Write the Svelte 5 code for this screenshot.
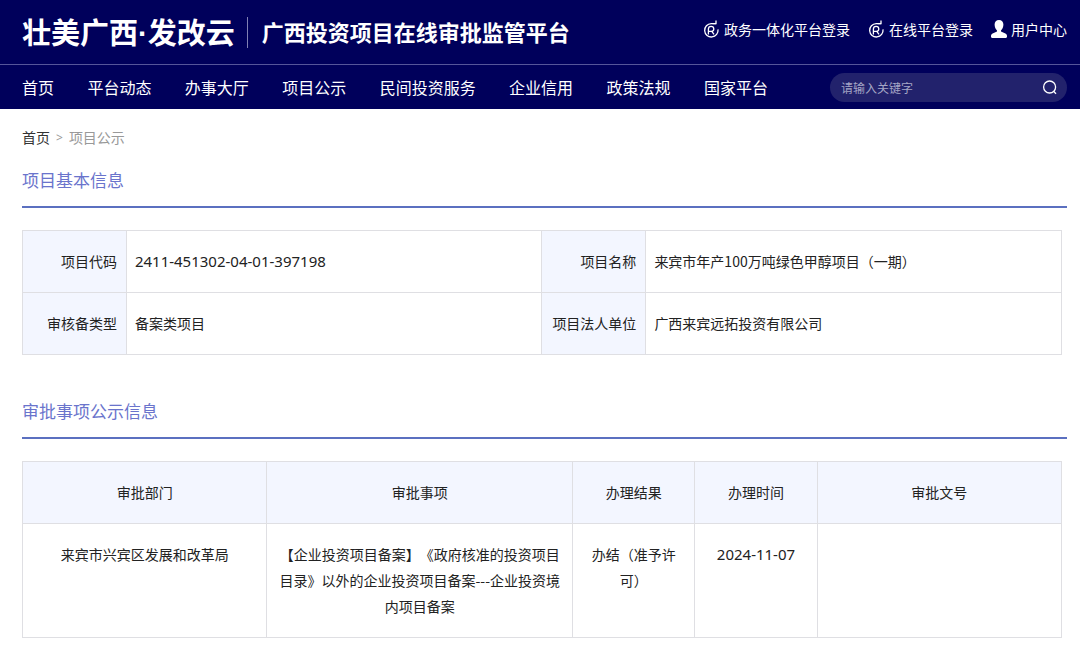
<script lang="ts">
  let keyword = '';

  const navItems = ['首页', '平台动态', '办事大厅', '项目公示', '民间投资服务', '企业信用', '政策法规', '国家平台'];
  const logins = ['政务一体化平台登录', '在线平台登录'];

  const baseInfo = [
    [
      { label: '项目代码', value: '2411-451302-04-01-397198', num: true },
      { label: '项目名称', value: '来宾市年产100万吨绿色甲醇项目（一期）', num: false }
    ],
    [
      { label: '审核备类型', value: '备案类项目', num: false },
      { label: '项目法人单位', value: '广西来宾远拓投资有限公司', num: false }
    ]
  ];

  const approvalHead = ['审批部门', '审批事项', '办理结果', '办理时间', '审批文号'];
  const approvals = [
    {
      dept: '来宾市兴宾区发展和改革局',
      item: '【企业投资项目备案】《政府核准的投资项目目录》以外的企业投资项目备案---企业投资境内项目备案',
      result: '办结（准予许可）',
      date: '2024-11-07',
      docNo: ''
    }
  ];
</script>

<header>
  <div class="top">
    <a class="brand" href="#/">
      <span class="logo">壮美广西<span class="dot">·</span>发改云</span>
      <span class="title">广西投资项目在线审批监管平台</span>
    </a>
    <div class="links">
      {#each logins as text}
        <a href="#/login">
          <svg width="17" height="18" viewBox="0 0 17 18" fill="none" stroke="currentColor" stroke-width="1.3">
            <path d="M13 3.600H8.200A6.700 6.700 0 1 0 15 9.400" />
            <path d="M9.600 3.600L13 3.600V.6" />
            <path d="M5.400 14.400V9a2.700 2.700 0 0 1 5.400 0c0 1.500-1 2.300-2.400 2.300H5.600M8.800 11.400l2.200 3" />
          </svg>
          {text}
        </a>
      {/each}
      <a href="#/user">
        <svg width="16" height="18" viewBox="0 0 16 18" fill="currentColor">
          <path d="M8 0C5.300 0 3.600 1.900 3.600 4.600c0 2.600 1 4.700 2.400 5.900v1.100L1.600 13.400C.6 13.900 0 14.800 0 16v.8C0 17.500.5 18 1.200 18h13.600c.7 0 1.200-.5 1.200-1.200V16c0-1.200-.6-2.100-1.600-2.600L10 11.600v-1.100c1.400-1.200 2.400-3.300 2.400-5.900C12.400 1.900 10.700 0 8 0z" />
        </svg>
        用户中心
      </a>
    </div>
  </div>
  <div class="bar">
    <nav>
      {#each navItems as item}
        <a href="#/nav">{item}</a>
      {/each}
    </nav>
    <form class="search" on:submit|preventDefault>
      <input type="text" aria-label="请输入关键字" placeholder="请输入关键字" bind:value={keyword} />
      <button type="submit" aria-label="搜索">
        <svg width="16" height="16" viewBox="0 0 16 16" fill="none" stroke="currentColor" stroke-width="1.3">
          <circle cx="7.600" cy="8" r="6" />
          <path d="M11.600 12.200l2.400 2.600" />
        </svg>
      </button>
    </form>
  </div>
</header>

<main>
  <div class="crumb">
    <a href="#/">首页</a>
    <i>&gt;</i>
    <span>项目公示</span>
  </div>

  <section>
    <h2>项目基本信息</h2>
    <table class="info">
      <colgroup>
        <col class="w10" /><col class="w40" /><col class="w10" /><col class="w40" />
      </colgroup>
      <tbody>
        {#each baseInfo as row}
          <tr>
            {#each row as cell}
              <th scope="row">{cell.label}</th>
              <td class:num={cell.num}>{cell.value}</td>
            {/each}
          </tr>
        {/each}
      </tbody>
    </table>
  </section>

  <section>
    <h2>审批事项公示信息</h2>
    <table class="list">
      <colgroup>
        <col class="w4" /><col class="w5" /><col class="w2" /><col class="w2" /><col class="w4" />
      </colgroup>
      <thead>
        <tr>
          {#each approvalHead as head}
            <th scope="col">{head}</th>
          {/each}
        </tr>
      </thead>
      <tbody>
        {#each approvals as row}
          <tr>
            <td>{row.dept}</td>
            <td>{row.item}</td>
            <td>{row.result}</td>
            <td class="num">{row.date}</td>
            <td>{row.docNo}</td>
          </tr>
        {/each}
      </tbody>
    </table>
  </section>
</main>

<style>
:global(body) {
  margin: 0;
  background: #fff;
  color: #222;
  font-family: "Noto Sans CJK SC", "Noto Sans", sans-serif;
  font-size: 14px;
  text-spacing-trim: space-all;
}

a {
  color: inherit;
  text-decoration: none;
}

header {
  background: #00005b;
  color: #fff;
}

.top {
  display: flex;
  justify-content: space-between;
  height: 64px;
  padding: 0 13px 0 22px;
  border-bottom: 1px solid #55559a;
}

.brand {
  display: flex;
  align-items: center;
  white-space: nowrap;
}

.logo {
  padding-right: 12px;
  border-right: 1px solid #8080b4;
  font-size: 29px;
  line-height: 28px;
  font-weight: 700;
}

.dot {
  font-family: "Liberation Sans", sans-serif;
}

.title {
  margin-left: 14px;
  padding-bottom: 3px;
  font-size: 22px;
  font-weight: 700;
}

.links {
  display: flex;
  align-items: center;
  gap: 18px;
  height: 58px;
  white-space: nowrap;
}

.links a {
  display: flex;
  align-items: center;
  gap: 4px;
}

.bar {
  display: flex;
  align-items: center;
  height: 44px;
  padding: 0 13px 0 22px;
}

nav {
  display: flex;
  flex: 1;
  justify-content: space-between;
  margin-right: 62px;
  font-size: 16px;
  line-height: 22px;
  white-space: nowrap;
}

.search {
  display: flex;
  align-items: center;
  width: 24%;
  height: 29px;
  max-width: 237px;
  border-radius: 15px;
  background: #22226c;
}

.search input {
  flex: 1;
  min-width: 0;
  padding: 0 0 0 11px;
  border: 0;
  outline: 0;
  background: none;
  color: #fff;
  font-family: inherit;
  font-size: 12px;
}

.search input::placeholder {
  color: #a6a6c6;
}

.search button {
  display: flex;
  padding: 0 9px;
  border: 0;
  background: none;
  color: #fff;
  cursor: pointer;
}

main {
  padding: 17px 13px 9px 22px;
}

.crumb {
  display: flex;
  gap: 6px;
  line-height: 22px;
  color: #999;
}

.crumb a {
  color: #333;
}

.crumb i {
  font-family: "Noto Sans", sans-serif;
  font-style: normal;
  font-size: 12px;
  line-height: 24px;
}

h2 {
  margin: 0 0 22px;
  padding-bottom: 14px;
  border-bottom: 2px solid #5b70c0;
  color: #6a74cc;
  font-size: 17px;
  font-weight: 400;
  line-height: 24px;
}

section {
  padding-top: 18px;
}

section + section {
  padding-top: 44px;
}

table {
  width: calc(100% - 5px);
  border-collapse: collapse;
  table-layout: fixed;
  line-height: 26px;
}

th,
td {
  padding: 17px 8px 18px;
  border: 1px solid #dfdfe3;
  font-weight: 400;
  vertical-align: top;
}

th {
  background: #f3f6ff;
}

.info th {
  padding-right: 9px;
  padding-left: 0;
  text-align: right;
}

.info td {
  text-align: left;
}

.list td,
.list th {
  text-align: center;
}

.num {
  font-family: "Noto Sans", sans-serif;
  font-size: 15px;
}

.w10 {
  width: 10%;
}

.w40 {
  width: 40%;
}

.w2 {
  width: 11.75%;
}

.w4 {
  width: 23.5%;
}

.w5 {
  width: 29.4%;
}
</style>
